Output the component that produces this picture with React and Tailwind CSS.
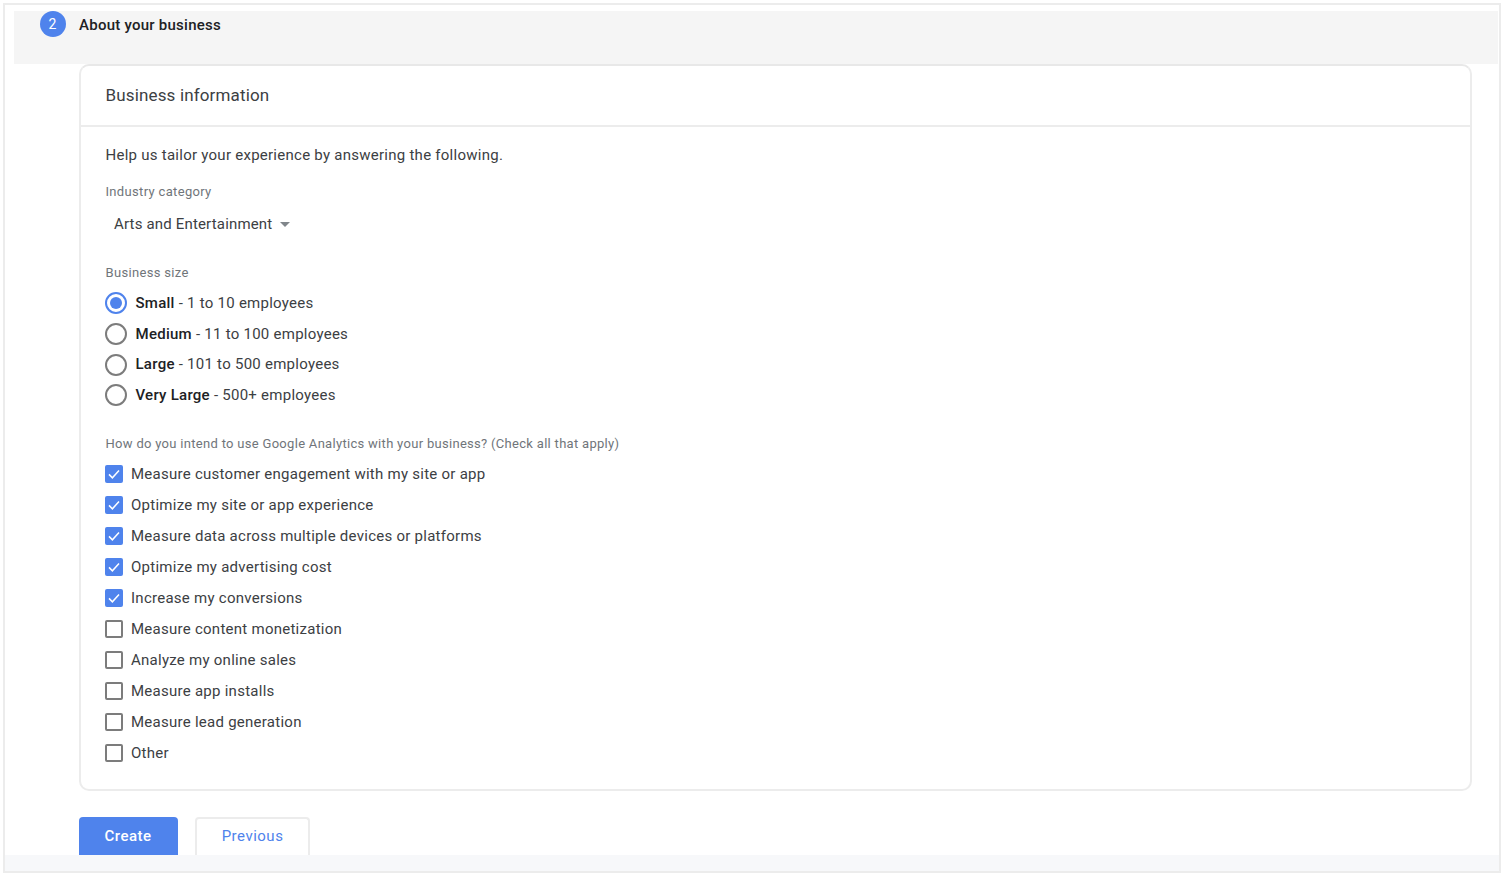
const radios = [
  ["Small", " - 1 to 10 employees", true],
  ["Medium", " - 11 to 100 employees", false],
  ["Large", " - 101 to 500 employees", false],
  ["Very Large", " - 500+ employees", false],
];
const checks = [
  ["Measure customer engagement with my site or app", true],
  ["Optimize my site or app experience", true],
  ["Measure data across multiple devices or platforms", true],
  ["Optimize my advertising cost", true],
  ["Increase my conversions", true],
  ["Measure content monetization", false],
  ["Analyze my online sales", false],
  ["Measure app installs", false],
  ["Measure lead generation", false],
  ["Other", false],
];

function Radio({ on }) {
  return (
    <span className={`flex h-[22px] w-[22px] shrink-0 items-center justify-center rounded-full border-2 ${on ? "border-[#4f83ec]" : "border-[#7c7c7c]"}`}>
      {on && <span className="h-3 w-3 rounded-full bg-[#4f83ec]" />}
    </span>
  );
}

function Check({ on }) {
  return on ? (
    <span className="flex h-[18px] w-[18px] shrink-0 items-center justify-center rounded-[2px] bg-[#4f83ec]">
      <svg width="14" height="14" viewBox="0 0 14 14" fill="none">
        <path d="M2 7.4 L5.4 10.8 L12 3.6" stroke="#fff" strokeWidth="1.5" />
      </svg>
    </span>
  ) : (
    <span className="h-[18px] w-[18px] shrink-0 rounded-[2px] border-2 border-[#7c7c7c]" />
  );
}

export default function App() {
  return (
    <div className="h-[875px] w-[1504px] overflow-hidden bg-white pl-[3px] pr-[3px] pt-[3px] pb-[2px] font-['Roboto',sans-serif] text-[#3c4043]">
      <div className="flex h-full flex-col border-2 border-[#ececec] bg-white">
        <div className="h-[6px] shrink-0" />
        <div className="ml-[9px] mr-[1px] flex h-[53px] shrink-0 items-start bg-[#f5f5f5] pl-[26px]">
          <div className="flex items-center">
            <span className="flex h-[26px] w-[26px] items-center justify-center rounded-full bg-[#4f83ec] pr-px text-[14px] text-white">2</span>
            <span className="ml-[13px] pt-[2px] text-[15px] font-medium tracking-[0.25px] text-[#202124]">About your business</span>
          </div>
        </div>

        <div className="min-h-0 flex-1 pl-[73.5px] pr-[27px]">
          <div className="h-[727px] rounded-[10px] border-2 border-[#ececec] border-t-[#e8e8e8]">
            <div className="flex h-[61px] items-center border-b-2 border-[#ececec] pl-[25px] text-[17px] tracking-[0.15px]">Business information</div>
            <div className="pl-[24.5px]">
              <p className="mt-[17.5px] pl-[0.5px] text-[15px] leading-[20px] tracking-[0.26px]">Help us tailor your experience by answering the following.</p>
              <p className="mt-[18px] pl-[0.5px] text-[13px] leading-[18px] tracking-[0.33px] text-[#70757a]">Industry category</p>
              <div className="mt-[13px] flex h-[22px] items-center pl-[9px] text-[15px] tracking-[0.17px]">
                <span>Arts and Entertainment</span>
                <span className="ml-[8px] h-0 w-0 border-x-[5px] border-t-[5px] border-x-transparent border-t-[#80868b]" />
              </div>
              <p className="mt-[28px] pl-[0.5px] text-[13px] leading-[18px] tracking-[0.33px] text-[#70757a]">Business size</p>
              <div className="mt-[10.5px] flex flex-col gap-[8.75px]">
                {radios.map(([b, r, on]) => (
                  <div key={b} className="flex h-[22px] items-center gap-[8.5px] text-[15px] tracking-[0.26px]">
                    <Radio on={on} />
                    <span><b className="font-medium text-[#202124]">{b}</b>{r}</span>
                  </div>
                ))}
              </div>
              <p className="mt-[28.5px] pl-[0.5px] text-[13px] leading-[18px] tracking-[0.3px] text-[#70757a]">How do you intend to use Google Analytics with your business? (Check all that apply)</p>
              <div className="mt-[10.5px] flex flex-col gap-[10px]">
                {checks.map(([t, on]) => (
                  <div key={t} className="flex h-[21px] items-center gap-[8px] text-[15px] tracking-[0.26px]">
                    <Check on={on} />
                    <span>{t}</span>
                  </div>
                ))}
              </div>
            </div>
          </div>
          <div className="mt-[26px] flex items-start gap-[17px] text-[15px] font-medium tracking-[0.5px]">
            <button className="flex h-[38px] w-[99px] items-center justify-center rounded-t-[4px] bg-[#4f83ec] text-white">Create</button>
            <button className="flex h-[38px] w-[115px] items-center justify-center rounded-t-[4px] border-x-2 border-t-2 border-[#ececec] bg-white pb-[2px] pl-px font-normal text-[#4f83ec]">Previous</button>
          </div>
        </div>
        <div className="h-[16px] shrink-0 bg-[#f7f8fa]" />
      </div>
    </div>
  );
}
